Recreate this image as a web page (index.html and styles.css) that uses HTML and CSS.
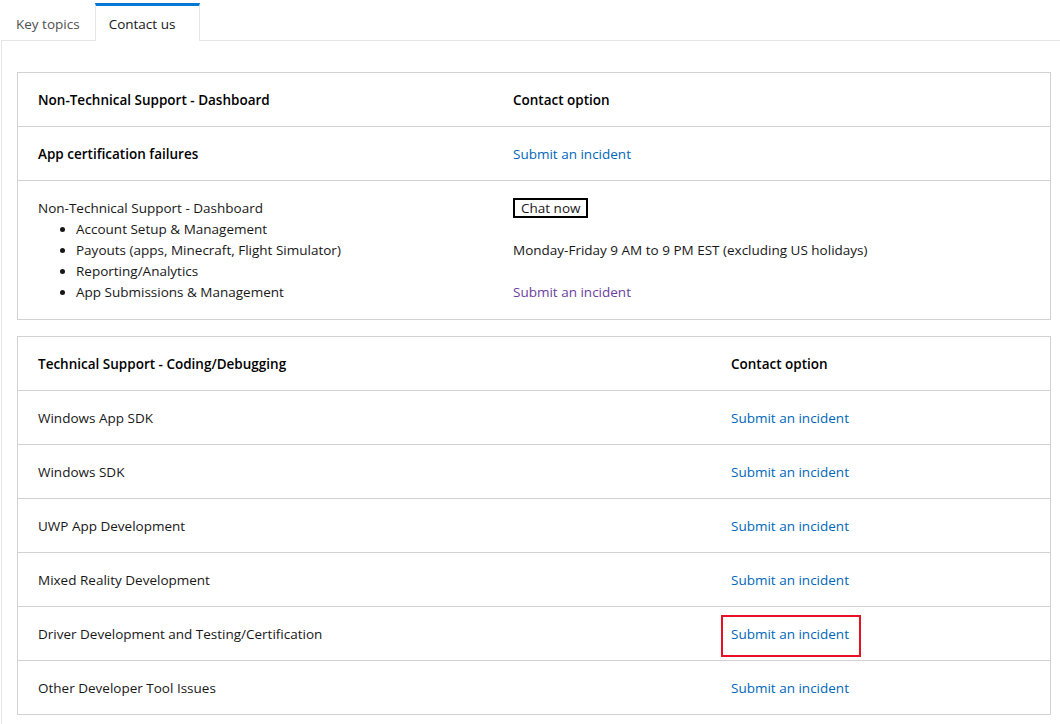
FILE: index.html
```html
<!DOCTYPE html>
<html>
<head>
<meta charset="utf-8">
<link rel="stylesheet" href="styles.css">
</head>
<body>
<div class="tabs">
  <div class="tab">Key topics</div>
  <div class="tab active">Contact us</div>
  <div class="tab-fill"></div>
</div>
<div class="panel">
  <div class="table t1">
    <div class="row head">
      <div class="cell">Non-Technical Support - Dashboard</div>
      <div class="cell">Contact option</div>
    </div>
    <div class="row">
      <div class="cell strong">App certification failures</div>
      <div class="cell"><a class="link">Submit an incident</a></div>
    </div>
    <div class="row tall">
      <div class="cell">
        <div>Non-Technical Support - Dashboard</div>
        <ul class="list">
          <li>Account Setup &amp; Management</li>
          <li>Payouts (apps, Minecraft, Flight Simulator)</li>
          <li>Reporting/Analytics</li>
          <li>App Submissions &amp; Management</li>
        </ul>
      </div>
      <div class="cell">
        <p class="para"><span class="chat">Chat now</span></p>
        <p class="para">Monday-Friday 9 AM to 9 PM EST (excluding US holidays)</p>
        <p class="para"><a class="link visited">Submit an incident</a></p>
      </div>
    </div>
  </div>
  <div class="table t2">
    <div class="row head">
      <div class="cell">Technical Support - Coding/Debugging</div>
      <div class="cell">Contact option</div>
    </div>
    <div class="row">
      <div class="cell">Windows App SDK</div>
      <div class="cell"><a class="link">Submit an incident</a></div>
    </div>
    <div class="row">
      <div class="cell">Windows SDK</div>
      <div class="cell"><a class="link">Submit an incident</a></div>
    </div>
    <div class="row">
      <div class="cell">UWP App Development</div>
      <div class="cell"><a class="link">Submit an incident</a></div>
    </div>
    <div class="row">
      <div class="cell">Mixed Reality Development</div>
      <div class="cell"><a class="link">Submit an incident</a></div>
    </div>
    <div class="row">
      <div class="cell">Driver Development and Testing/Certification</div>
      <div class="cell"><a class="link highlight">Submit an incident</a></div>
    </div>
    <div class="row">
      <div class="cell">Other Developer Tool Issues</div>
      <div class="cell"><a class="link">Submit an incident</a></div>
    </div>
  </div>
</div>
</body>
</html>
```
FILE: styles.css
```css
* { box-sizing: border-box; }
html, body { margin: 0; padding: 0; background: #fff; }
body {
  font-family: "Open Sans", "Noto Sans", sans-serif;
  font-size: 13.5px;
  line-height: 21px;
  color: #171717;
  padding-left: 1px;
  overflow: hidden;
}
.tabs {
  display: flex;
  height: 41px;
  align-items: stretch;
}
.tab {
  padding: 14px 15px 0 15px;
  color: #505050;
  border-bottom: 1px solid #e6e6e6;
}
.tab.active {
  color: #171717;
  margin-top: 3px;
  padding-top: 8px;
  padding-left: 13px;
  padding-right: 24px;
  border-top: 3px solid #0078d4;
  border-left: 1px solid #e6e6e6;
  border-right: 1px solid #e6e6e6;
  border-bottom: none;
}
.tab-fill { flex: 1; border-bottom: 1px solid #e6e6e6; }
.panel {
  border-left: 1px solid #e6e6e6;
  padding: 31px 0 20px 15px;
}
.table {
  width: 1034px;
  border: 1px solid #d2d2d2;
  margin-bottom: 16px;
}
.row {
  display: grid;
  border-top: 1px solid #d2d2d2;
}
.row:first-child { border-top: none; }
.t1 .row { grid-template-columns: 475px 1fr; }
.t2 .row { grid-template-columns: 693px 1fr; }
.cell {
  padding: 17px 20px 15px 20px;
}
.row.tall .cell { padding-bottom: 16px; }
.row.head .cell, .cell.strong { font-weight: 600; color: #000; }
.list {
  margin: 0;
  padding-left: 38px;
}
.para { margin: 0 0 21px 0; }
.para:last-child { margin-bottom: 0; }
.chat {
  display: inline-block;
  border: 2px solid #000;
  line-height: 16px;
  padding: 0 6px 0 6px;
  color: #171717;
  vertical-align: top;
  margin-top: 0;
}
.link { color: #0067b8; }
.link.visited { color: #6b3fa0; }
.link.highlight {
  display: inline-block;
  position: relative;
}
.link.highlight::before {
  content: "";
  position: absolute;
  left: -10px;
  top: -9px;
  right: -12px;
  bottom: -12px;
  border: 2px solid #e81123;
}
```
